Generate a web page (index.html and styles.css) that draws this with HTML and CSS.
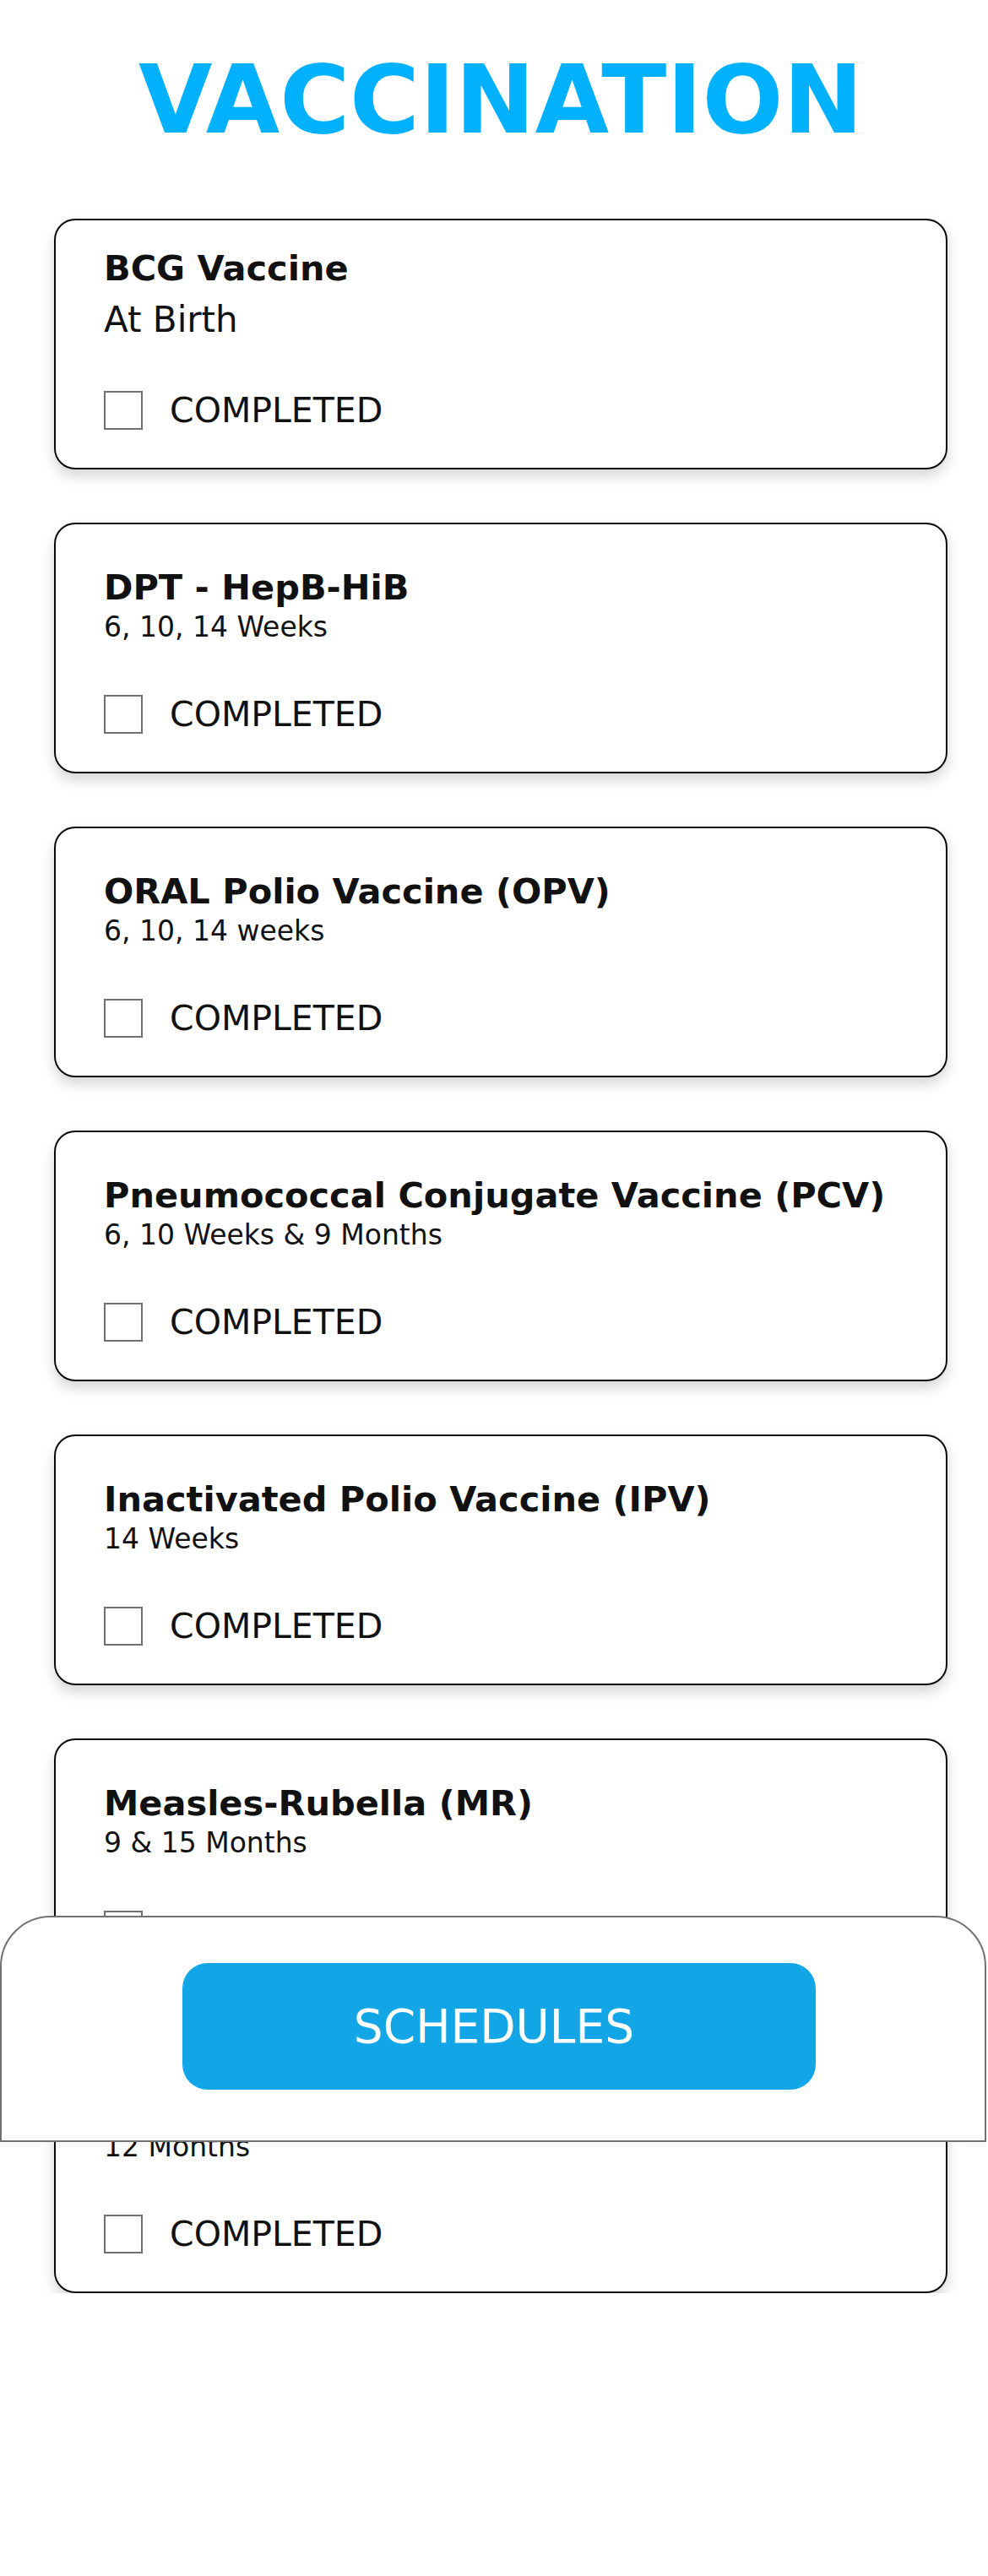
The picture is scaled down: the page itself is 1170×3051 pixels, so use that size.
FILE: index.html
```html
<!DOCTYPE html>
<html lang="en">
<head>
<meta charset="utf-8">
<title>Vaccination</title>
<link rel="stylesheet" href="styles.css">
</head>
<body>
<main class="page">
  <h1 class="title">VACCINATION</h1>
  <section class="list">
    <article class="card card-first">
      <div class="card-name">BCG Vaccine</div>
      <div class="card-age card-age-large">At Birth</div>
      <label class="check"><span class="box"></span><span class="check-label">COMPLETED</span></label>
    </article>
    <article class="card">
      <div class="card-name">DPT - HepB-HiB</div>
      <div class="card-age">6, 10, 14 Weeks</div>
      <label class="check"><span class="box"></span><span class="check-label">COMPLETED</span></label>
    </article>
    <article class="card">
      <div class="card-name">ORAL Polio Vaccine (OPV)</div>
      <div class="card-age">6, 10, 14 weeks</div>
      <label class="check"><span class="box"></span><span class="check-label">COMPLETED</span></label>
    </article>
    <article class="card">
      <div class="card-name">Pneumococcal Conjugate Vaccine (PCV)</div>
      <div class="card-age">6, 10 Weeks &amp; 9 Months</div>
      <label class="check"><span class="box"></span><span class="check-label">COMPLETED</span></label>
    </article>
    <article class="card">
      <div class="card-name">Inactivated Polio Vaccine (IPV)</div>
      <div class="card-age">14 Weeks</div>
      <label class="check"><span class="box"></span><span class="check-label">COMPLETED</span></label>
    </article>
    <article class="card">
      <div class="card-name">Measles-Rubella (MR)</div>
      <div class="card-age">9 &amp; 15 Months</div>
      <label class="check"><span class="box"></span><span class="check-label">COMPLETED</span></label>
    </article>
    <article class="card">
      <div class="card-name">Hepatitis A Vaccine</div>
      <div class="card-age">12 Months</div>
      <label class="check"><span class="box"></span><span class="check-label">COMPLETED</span></label>
    </article>
  </section>
</main>
<div class="bottom-bar">
  <button class="btn" type="button">SCHEDULES</button>
</div>
</body>
</html>
```
FILE: styles.css
```css
html, body {
  margin: 0;
  padding: 0;
  background: #ffffff;
}

body {
  font-family: "DejaVu Sans", "Liberation Sans", sans-serif;
  color: #111111;
}

.page {
  width: 1058px;
  margin-left: 64px;
}

.title {
  margin: 0 0 75px 0;
  padding-top: 52px;
  font-size: 113px;
  line-height: 132px;
  font-weight: 700;
  color: #02b1fe;
  text-align: center;
}

.list {
  display: flex;
  flex-direction: column;
  gap: 63px;
}

.card {
  box-sizing: border-box;
  height: 297px;
  border: 2px solid #0a0a0a;
  border-radius: 25px;
  background: #ffffff;
  box-shadow: 0 8px 16px rgba(0, 0, 0, 0.17);
  padding: 50px 0 44px 57px;
  display: flex;
  flex-direction: column;
}

.card-first {
  padding-top: 32px;
}

.card-name {
  font-size: 41.5px;
  line-height: 50px;
  font-weight: 700;
  white-space: nowrap;
}

.card-age {
  font-size: 33px;
  line-height: 44px;
  font-weight: 400;
}

.card-age-large {
  font-size: 42px;
  line-height: 71px;
}

.check {
  margin-top: auto;
  display: flex;
  align-items: center;
  gap: 32px;
  height: 48px;
}

.box {
  box-sizing: border-box;
  width: 46px;
  height: 46px;
  border: 2px solid #707070;
  background: #ffffff;
}

.check-label {
  font-size: 41px;
  line-height: 48px;
}

.bottom-bar {
  position: absolute;
  top: 2269px;
  left: 0;
  box-sizing: border-box;
  width: 1168px;
  height: 268px;
  border: 2px solid #727272;
  border-radius: 60px 60px 0 0;
  background: #ffffff;
  padding: 54px 0 0 214px;
}

.btn {
  box-sizing: border-box;
  width: 750px;
  height: 150px;
  border: none;
  border-radius: 30px;
  background: #12a6e6;
  color: #ffffff;
  font-family: "DejaVu Sans", "Liberation Sans", sans-serif;
  font-size: 55px;
  font-weight: 400;
  padding: 0 12px 0 0;
  display: flex;
  align-items: center;
  justify-content: center;
}
```
